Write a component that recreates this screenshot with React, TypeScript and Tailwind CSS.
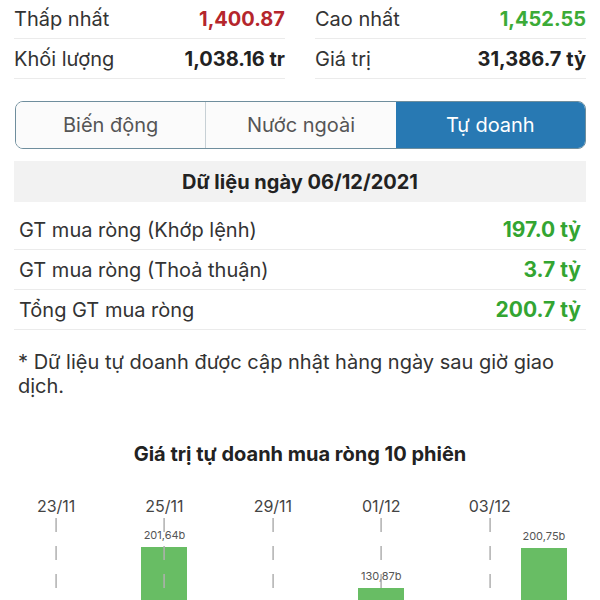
import React from "react";

const font = { fontFamily: "Inter, 'Noto Sans', sans-serif" };

type Col = { date?: string; value?: number; label?: string };

const cols: Col[] = [
  { date: "23/11" },
  {},
  { date: "25/11", value: 201.64, label: "201,64b" },
  {},
  { date: "29/11" },
  {},
  { date: "01/12", value: 130.87, label: "130,87b" },
  {},
  { date: "03/12" },
  { value: 200.75, label: "200,75b" },
];

function StatRow({ label, value, cls }: { label: string; value: string; cls: string }) {
  return (
    <div className="h-[40px] border-b border-[#ebebeb] flex items-center justify-between">
      <span className="text-[20px] text-[#333]">{label}</span>
      <span className={"text-[20px] font-bold " + cls}>{value}</span>
    </div>
  );
}

function NetRow({ label, value }: { label: string; value: string }) {
  return (
    <div className="h-[40px] border-b border-[#ebebeb] flex items-center justify-between px-[5px]">
      <span className="text-[20px] text-[#333]">{label}</span>
      <span className="text-[21px] font-bold text-[#33a532]">{value}</span>
    </div>
  );
}

export default function App() {
  const scale = 0.579;
  return (
    <div className="w-[600px] h-[600px] overflow-hidden bg-white text-[#333]" style={font}>
      <div className="px-[14px]">
        <div className="grid grid-cols-2 gap-x-[30px] -mt-[1px]">
          <div className="flex flex-col">
            <StatRow label="Thấp nhất" value="1,400.87" cls="text-[#b5262c]" />
            <StatRow label="Khối lượng" value="1,038.16 tr" cls="text-[#222]" />
          </div>
          <div className="flex flex-col">
            <StatRow label="Cao nhất" value="1,452.55" cls="text-[#3cab37]" />
            <StatRow label="Giá trị" value="31,386.7 tỷ" cls="text-[#222]" />
          </div>
        </div>

        <div className="mt-[22px] ml-[1px] h-[48px] flex border-[1.5px] border-[#6f8e9d] rounded-[8px] overflow-hidden">
          <div className="flex-1 flex items-center justify-center text-[20px] text-[#555] bg-[#fbfbfb] border-r-[1.5px] border-[#c7d0d5]">
            Biến động
          </div>
          <div className="flex-1 flex items-center justify-center text-[20px] text-[#555] bg-[#fbfbfb]">
            Nước ngoài
          </div>
          <div className="flex-1 flex items-center justify-center text-[20px] text-white bg-[#2879b3]">
            Tự doanh
          </div>
        </div>

        <div className="mt-[12px] h-[41px] bg-[#f2f2f2] flex items-center justify-center text-[20px] font-bold text-[#222]">
          Dữ liệu ngày 06/12/2021
        </div>

        <div className="mt-[8px] flex flex-col">
          <NetRow label="GT mua ròng (Khớp lệnh)" value="197.0 tỷ" />
          <NetRow label="GT mua ròng (Thoả thuận)" value="3.7 tỷ" />
          <NetRow label="Tổng GT mua ròng" value="200.7 tỷ" />
        </div>

        <p className="mt-[20px] px-[4px] text-[20px] leading-[24px] text-[#333]">
          * Dữ liệu tự doanh được cập nhật hàng ngày sau giờ giao dịch.
        </p>

        <div className="mt-[44px] h-[24px] flex items-center justify-center text-[20px] font-bold text-[#222]">
          Giá trị tự doanh mua ròng 10 phiên
        </div>

        <div className="mt-[30px] ml-[15px] w-[542px] grid grid-cols-10">
          {cols.map((c, i) => (
            <div key={i} className="flex flex-col items-center">
              <div className="h-[20px] flex items-center justify-center text-[16px] text-[#444] whitespace-nowrap">
                {c.date ?? ""}
              </div>
              <div className="relative w-full h-[148px] flex flex-col items-center justify-end">
                {c.value !== undefined && (
                  <>
                    <div className="text-[11px] leading-[14px] text-[#555] mb-[5px]">{c.label}</div>
                    <div className="w-[46px] bg-[#68bd64]" style={{ height: c.value * scale }} />
                  </>
                )}
                {c.date && (
                  <svg className="absolute left-0 top-0 w-full h-full pointer-events-none" viewBox="0 0 54 148" preserveAspectRatio="none">
                    <line x1="27" y1="2" x2="27" y2="148" stroke="#b0b0b0" strokeWidth="1.5" strokeDasharray="14 14" />
                  </svg>
                )}
              </div>
            </div>
          ))}
        </div>
      </div>
    </div>
  );
}
